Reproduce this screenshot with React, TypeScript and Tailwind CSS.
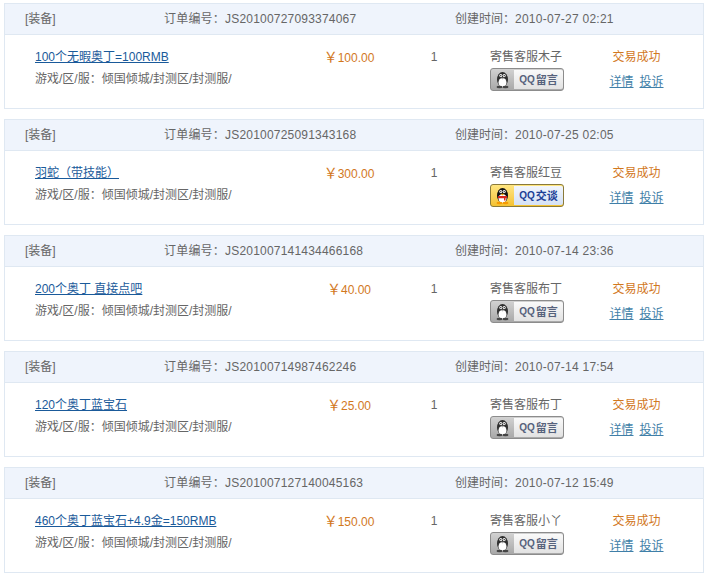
const fontStack = '"Liberation Sans", "Noto Sans CJK SC", sans-serif';

type Order = {
  no: string;
  time: string;
  title: string;
  price: string;
  seller: string;
  online?: boolean;
};

const orders: Order[] = [
  { no: "JS20100727093374067", time: "2010-07-27 02:21", title: "100个无暇奥丁=100RMB", price: "100.00", seller: "寄售客服木子" },
  { no: "JS20100725091343168", time: "2010-07-25 02:05", title: "羽蛇（带技能）", price: "300.00", seller: "寄售客服红豆", online: true },
  { no: "JS201007141434466168", time: "2010-07-14 23:36", title: "200个奥丁 直接点吧", price: "40.00", seller: "寄售客服布丁" },
  { no: "JS20100714987462246", time: "2010-07-14 17:54", title: "120个奥丁蓝宝石", price: "25.00", seller: "寄售客服布丁" },
  { no: "JS201007127140045163", time: "2010-07-12 15:49", title: "460个奥丁蓝宝石+4.9金=150RMB", price: "150.00", seller: "寄售客服小丫" },
];

function Penguin({ online }: { online?: boolean }) {
  return (
    <svg width="17" height="18" viewBox="0 0 17 18" className="shrink-0">
      <ellipse cx="8.5" cy="8.5" rx="5.5" ry="7.5" fill={online ? "#111" : "#2f2f2f"} />
      <ellipse cx="8.5" cy="11.5" rx="4" ry="4.5" fill="#fff" />
      <circle cx="6.8" cy="4.6" r="1.5" fill="#fff" />
      <circle cx="10.2" cy="4.6" r="1.5" fill="#fff" />
      <circle cx="6.8" cy="4.6" r="0.7" fill="#111" />
      <circle cx="10.2" cy="4.6" r="0.7" fill="#111" />
      <path d="M6.5 6.8h4l-2 1.6z" fill={online ? "#f5a800" : "#aaa"} />
      {online && <path d="M4 9h9v1.800l-1.500 .4v2.300h-1.500v-2.300h-6z" fill="#d8261c" />}
      <ellipse cx="5.5" cy="16" rx="3" ry="1.2" fill={online ? "#f59a00" : "#444"} />
      <ellipse cx="11.5" cy="16" rx="3" ry="1.2" fill={online ? "#f59a00" : "#444"} />
    </svg>
  );
}

function QQButton({ online }: { online?: boolean }) {
  if (online) {
    return (
      <div className="ml-[2px] flex h-[23px] w-[74px] items-center rounded-[3px] border border-[#8a7a3a] bg-linear-to-b from-[#ffe680] to-[#f5c22e]">
        <div className="flex h-full w-[23px] items-center justify-center">
          <Penguin online />
        </div>
        <div className="flex h-[19px] flex-1 items-center justify-center gap-[1px] rounded-r-[2px] bg-linear-to-b from-[#f2f6fd] to-[#d5e1f5] text-[11px] font-bold text-[#1c3f96]">
          <span className="text-[10px]">QQ</span>
          <span>交谈</span>
        </div>
      </div>
    );
  }
  return (
    <div className="ml-[2px] flex h-[23px] w-[74px] items-center rounded-[3px] border border-[#8c8c8c] bg-linear-to-b from-[#d2d2d2] to-[#a8a8a8]">
      <div className="flex h-full w-[23px] items-center justify-center">
        <Penguin />
      </div>
      <div className="flex h-[19px] flex-1 items-center justify-center gap-[1px] rounded-r-[2px] bg-linear-to-b from-[#fafafa] to-[#e2e2e2] text-[11px] font-bold text-[#56627c]">
        <span className="text-[10px]">QQ</span>
        <span>留言</span>
      </div>
    </div>
  );
}

function OrderCard({ order }: { order: Order }) {
  return (
    <div className="h-[106px] w-[700px] border border-[#dfe8f2] bg-white">
      <div className="flex h-[31px] items-center border-b border-[#dfe8f2] bg-[#eff4fc] text-[12px] text-[#666]">
        <span className="ml-[20px] w-[139px]">[装备]</span>
        <span className="w-[291px] tracking-[0.2px]">订单编号：{order.no}</span>
        <span>
          创建时间：<span className="tracking-[0.25px]">{order.time}</span>
        </span>
      </div>
      <div className="flex pt-[11px] text-[12px] leading-[22px]">
        <div className="w-[295px] pl-[30px]">
          <a className="text-[#1a5a9a] underline">{order.title}</a>
          <p className="text-[#666]">游戏/区/服：倾国倾城/封测区/封测服/</p>
        </div>
        <div className="w-[100px] pr-[2px] text-center text-[#d2781e]">
          <span className="text-[14px]">￥</span>
          {order.price}
        </div>
        <div className="w-[70px] pr-[2px] text-center text-[#666]">1</div>
        <div className="flex w-[112px] flex-col items-center text-[#666]">
          {order.seller}
          <QQButton online={order.online} />
        </div>
        <div className="ml-[7px] w-[95px] text-center">
          <p className="text-[#d2781e]">交易成功</p>
          <p className="mt-[3px] text-[#3f7fa8]">
            <a className="underline">详情</a>
            <a className="ml-[6px] underline">投诉</a>
          </p>
        </div>
      </div>
    </div>
  );
}

export default function App() {
  return (
    <div className="flex h-[582px] w-[710px] flex-col gap-[10px] bg-white pl-[4px] pt-[3px]" style={{ fontFamily: fontStack }}>
      {orders.map((order) => (
        <OrderCard key={order.no} order={order} />
      ))}
    </div>
  );
}
